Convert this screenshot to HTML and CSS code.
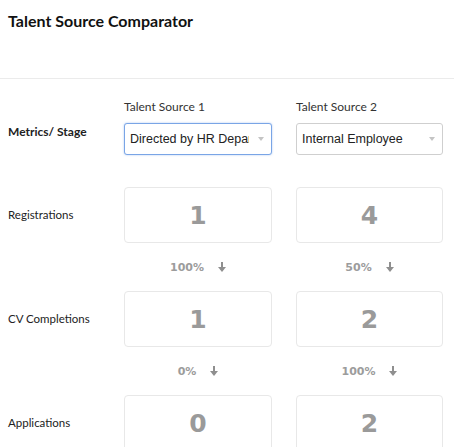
FILE: index.html
```html
<!DOCTYPE html>
<html>
<head>
    <title>Talent Source Comparator</title>
    <link rel="stylesheet" href="styles.css">
</head>
<body>
    <div class="header">
        <h1>Talent Source Comparator</h1>
    </div>

    <div class="board">
        <div class="row sources">
            <div class="label strong">Metrics/ Stage</div>
            <div class="source">
                <div class="source-name">Talent Source 1</div>
                <div class="select-wrap">
                    <select class="focused">
                        <option>Directed by HR Department</option>
                        <option>Internal Employee</option>
                    </select>
                </div>
            </div>
            <div class="source">
                <div class="source-name">Talent Source 2</div>
                <div class="select-wrap">
                    <select>
                        <option>Internal Employee</option>
                        <option>Directed by HR Department</option>
                    </select>
                </div>
            </div>
        </div>

        <div class="row stage">
            <div class="label">Registrations</div>
            <div class="count">1</div>
            <div class="count">4</div>
        </div>
        <div class="row rate">
            <div></div>
            <div class="pct">100% <svg class="arrow" viewBox="0 0 8 10"><rect x="3" y="0" width="2" height="6"/><polygon points="0,5 8,5 4,10"/></svg></div>
            <div class="pct">50% <svg class="arrow" viewBox="0 0 8 10"><rect x="3" y="0" width="2" height="6"/><polygon points="0,5 8,5 4,10"/></svg></div>
        </div>

        <div class="row stage">
            <div class="label">CV Completions</div>
            <div class="count">1</div>
            <div class="count">2</div>
        </div>
        <div class="row rate">
            <div></div>
            <div class="pct">0% <svg class="arrow" viewBox="0 0 8 10"><rect x="3" y="0" width="2" height="6"/><polygon points="0,5 8,5 4,10"/></svg></div>
            <div class="pct">100% <svg class="arrow" viewBox="0 0 8 10"><rect x="3" y="0" width="2" height="6"/><polygon points="0,5 8,5 4,10"/></svg></div>
        </div>

        <div class="row stage">
            <div class="label">Applications</div>
            <div class="count">0</div>
            <div class="count">2</div>
        </div>
    </div>
</body>
</html>
```

FILE: styles.css
```css
body {
    margin: 0;
    font-family: Lato, "Open Sans", sans-serif;
    color: #333;
    background: white;
}
.header {
    height: 78px;
    border-bottom: 1px solid #ebebeb;
}
h1 {
    margin: 0;
    padding: 11px 8px 0;
    font-size: 16px;
    line-height: 20px;
    font-weight: 700;
    color: #111;
}
.board {
    padding: 18px 11px 0 8px;
}
.row {
    display: grid;
    grid-template-columns: 92px 148px 147px;
    column-gap: 24px;
}
.label {
    font-size: 11.5px;
    align-self: center;
    color: #222;
    white-space: nowrap;
    margin-bottom: 2px;
}
.strong {
    font-weight: 700;
    font-size: 12px;
    align-self: start;
    padding-top: 27px;
}
.source-name {
    font-size: 12px;
    line-height: 20px;
    color: #333;
}
.select-wrap {
    position: relative;
    margin-top: 6px;
}
.select-wrap::after {
    content: "";
    position: absolute;
    right: 8px;
    top: 14px;
    border-left: 3.5px solid transparent;
    border-right: 3.5px solid transparent;
    border-top: 4px solid #c4c4c4;
    pointer-events: none;
}
select {
    appearance: none;
    -webkit-appearance: none;
    width: 100%;
    height: 32px;
    padding: 0 22px 0 5px;
    border: 1px solid #cfcfcf;
    border-radius: 3px;
    background: white;
    font-family: "Liberation Sans", Arial, sans-serif;
    font-size: 12.5px;
    color: #222;
    outline: none;
}
select.focused {
    border-color: #7aa5e6;
    box-shadow: 0 0 2px rgba(80, 140, 230, 0.5);
}
.stage {
    height: 56px;
}
.sources + .stage {
    margin-top: 32px;
}
.count {
    border: 1px solid #e8e8e8;
    border-radius: 4px;
    display: flex;
    align-items: center;
    justify-content: center;
    font-family: "DejaVu Sans", Verdana, sans-serif;
    font-weight: 700;
    font-size: 25px;
    color: #9a9a9a;
}
.rate {
    height: 48px;
}
.pct {
    display: flex;
    align-items: center;
    justify-content: center;
    gap: 14px;
    font-family: "DejaVu Sans", Verdana, sans-serif;
    font-weight: 700;
    font-size: 11px;
    color: #9c9c9c;
}
.arrow {
    width: 8px;
    height: 10px;
    fill: #8f8f8f;
}
```
